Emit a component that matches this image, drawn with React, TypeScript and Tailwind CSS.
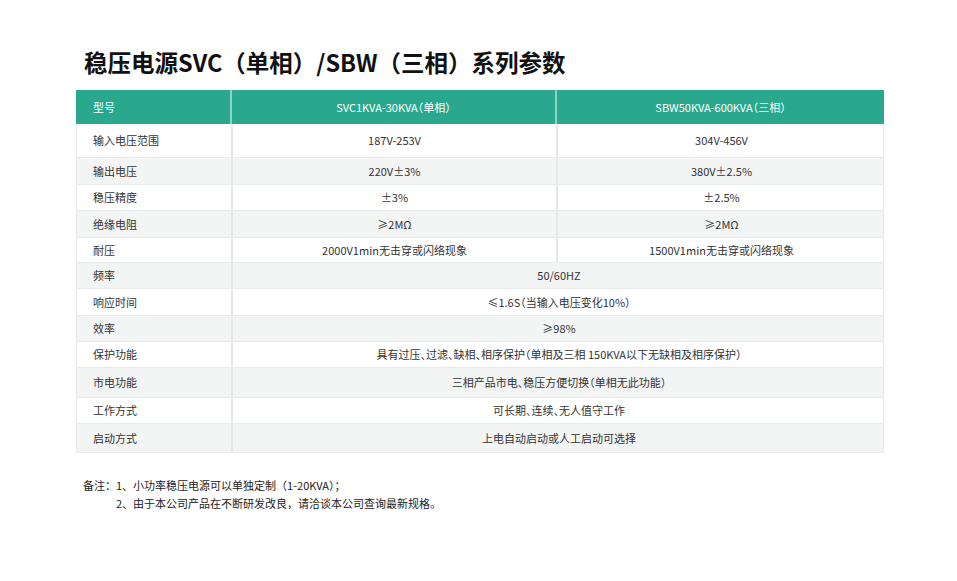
import React from 'react';

type Row = { label: string; h: string; a: string; b?: string; gray: boolean };

const rows: Row[] = [
    { label: '输入电压范围', h: 'h-[34px]', a: '187V-253V', b: '304V-456V', gray: false },
    { label: '输出电压', h: 'h-[27px]', a: '220V±3%', b: '380V±2.5%', gray: true },
    { label: '稳压精度', h: 'h-[26px]', a: '±3%', b: '±2.5%', gray: false },
    { label: '绝缘电阻', h: 'h-[27px]', a: '≥2MΩ', b: '≥2MΩ', gray: true },
    { label: '耐压', h: 'h-[25px]', a: '2000V1min无击穿或闪络现象', b: '1500V1min无击穿或闪络现象', gray: false },
    { label: '频率', h: 'h-[26px]', a: '50/60HZ', gray: true },
    { label: '响应时间', h: 'h-[27px]', a: '≤1.6S（当输入电压变化10%）', gray: false },
    { label: '效率', h: 'h-[26px]', a: '≥98%', gray: true },
    { label: '保护功能', h: 'h-[26px]', a: '具有过压、过滤、缺相、相序保护（单相及三相 150KVA以下无缺相及相序保护）', gray: false },
    { label: '市电功能', h: 'h-[30px]', a: '三相产品市电、稳压方便切换（单相无此功能）', gray: true },
    { label: '工作方式', h: 'h-[26px]', a: '可长期、连续、无人值守工作', gray: false },
    { label: '启动方式', h: 'h-[29px]', a: '上电自动启动或人工启动可选择', gray: true },
];

export default function App() {
    return (
        <div
            className="w-[957px] h-[581px] bg-white text-[#333] px-[76px] pt-[47px]"
            style={{ fontFamily: '"Noto Sans CJK SC", "Noto Sans", sans-serif' }}
        >
            {/* Title */}
            <h1 className="ml-[8px] mb-[13px] text-[23.5px] leading-[30px] font-bold text-[#111]">
                稳压电源SVC（单相）/SBW（三相）系列参数
            </h1>

            {/* Table */}
            <div className="w-[808px] text-[11px] [font-feature-settings:'halt']">
                <div className="grid grid-cols-[156px_325px_327px] h-[34px] bg-[#29a88e] text-white">
                    <div className="flex items-center pl-[17px] border-r-2 border-[#8fd3c4]">型号</div>
                    <div className="flex items-center justify-center border-r-2 border-[#8fd3c4]">SVC1KVA-30KVA（单相）</div>
                    <div className="flex items-center justify-center">SBW50KVA-600KVA（三相）</div>
                </div>

                {rows.map((r, idx) => (
                    <div
                        key={idx}
                        className={`grid grid-cols-[156px_325px_327px] ${r.h} border-b border-l border-r border-[#e9ebeb] ${r.gray ? 'bg-[#f3f5f5]' : 'bg-white'}`}
                    >
                        <div className="flex items-center pl-[16px] border-r-2 border-[#e6e8e8]">{r.label}</div>
                        {r.b ? (
                            <>
                                <div className="flex items-center justify-center border-r-2 border-[#e6e8e8]">{r.a}</div>
                                <div className="flex items-center justify-center">{r.b}</div>
                            </>
                        ) : (
                            <div className="col-span-2 flex items-center justify-center">{r.a}</div>
                        )}
                    </div>
                ))}
            </div>

            {/* Notes */}
            <div className="mt-[23px] ml-[7px] text-[11px] leading-[18px] text-[#222]">
                <div>备注：1、小功率稳压电源可以单独定制（1-20KVA）；</div>
                <div className="pl-[33px]">2、由于本公司产品在不断研发改良，请洽谈本公司查询最新规格。</div>
            </div>
        </div>
    );
}
